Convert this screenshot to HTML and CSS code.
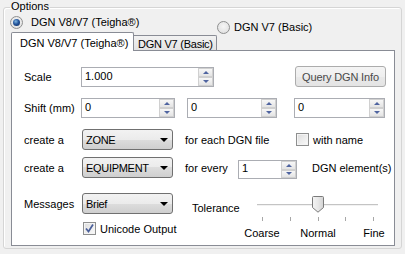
FILE: index.html
```html
<!DOCTYPE html>
<html>
<head>
<meta charset="utf-8">
<link rel="stylesheet" href="styles.css">
</head>
<body>
<fieldset class="options">
  <legend>Options</legend>
  <div class="radios">
    <label class="radio on"><span class="rdot"></span>DGN V8/V7 (Teigha®)</label>
    <label class="radio r2"><span class="rdot"></span>DGN V7 (Basic)</label>
  </div>
  <div class="tabs">
    <div class="tab active">DGN V8/V7 (Teigha®)</div>
    <div class="tab">DGN V7 (Basic)</div>
  </div>
  <div class="panel">
    <div class="row r1">
      <span class="lbl">Scale</span>
      <div class="spin w-scale"><span class="val">1.000</span><span class="sb"><i class="up"></i><i class="dn"></i></span></div>
      <button class="btn">Query DGN Info</button>
    </div>
    <div class="row r2">
      <span class="lbl">Shift (mm)</span>
      <div class="spin w-s1"><span class="val">0</span><span class="sb"><i class="up"></i><i class="dn"></i></span></div>
      <div class="spin w-s2"><span class="val">0</span><span class="sb"><i class="up"></i><i class="dn"></i></span></div>
      <div class="spin w-s3"><span class="val">0</span><span class="sb"><i class="up"></i><i class="dn"></i></span></div>
    </div>
    <div class="row r3">
      <span class="lbl">create a</span>
      <div class="combo">ZONE</div>
      <span class="mid">for each DGN file</span>
      <span class="check"></span>
      <span class="ctext">with name</span>
    </div>
    <div class="row r4">
      <span class="lbl">create a</span>
      <div class="combo">EQUIPMENT</div>
      <span class="mid2">for every</span>
      <div class="spin w-n"><span class="val">1</span><span class="sb"><i class="up"></i><i class="dn"></i></span></div>
      <span class="elem">DGN element(s)</span>
    </div>
    <div class="bottom">
      <div class="bl">
        <div class="row r5">
          <span class="lbl">Messages</span>
          <div class="combo">Brief</div>
        </div>
        <div class="row r6">
          <span class="check checked"><svg width="9" height="9" viewBox="0 0 9 9"><path d="M1 4.5 L3.5 7.5 L8 0.5" fill="none" stroke="#4a5f9a" stroke-width="1.7"/></svg></span>
          <span class="ctext">Unicode Output</span>
        </div>
      </div>
      <div class="br">
        <span class="tol">Tolerance</span>
        <div class="slider">
          <div class="track-area">
            <div class="track"></div>
            <div class="thumb"><svg width="12" height="17" viewBox="0 0 12 17"><defs><linearGradient id="tg" x1="0" y1="0" x2="1" y2="0"><stop offset="0" stop-color="#f4f4f4"/><stop offset="0.5" stop-color="#e8e8e8"/><stop offset="1" stop-color="#d2d2d2"/></linearGradient></defs><path d="M1.5 0.5 H10.5 Q11.5 0.5 11.5 1.5 V11.5 L6 16.2 L0.5 11.5 V1.5 Q0.5 0.5 1.5 0.5 Z" fill="url(#tg)" stroke="#7a7a7a"/></svg></div>
          </div>
          <div class="ticks"><i></i><i></i><i></i><i></i><i></i></div>
          <div class="tlabels"><span class="c1">Coarse</span><span class="c3">Normal</span><span class="c5">Fine</span></div>
        </div>
      </div>
    </div>
  </div>
</fieldset>
</body>
</html>
```

FILE: styles.css
```css
* { box-sizing: border-box; }
html, body { margin: 0; padding: 0; }
body {
  width: 405px;
  height: 254px;
  background: #f0f0f0;
  font-family: "Liberation Sans", Arial, sans-serif;
  font-size: 11px;
  color: #000;
  overflow: hidden;
  white-space: nowrap;
}
.options {
  margin: 0 3px;
  padding: 0 5px 2px 7px;
  border: 1px solid #d5d5d5;
  border-radius: 3px;
  box-shadow: inset 1px 1px 0 #fff;
  height: 249px;
  min-width: 0;
}
.options legend {
  padding: 0 1px;
  margin-left: -1px;
  height: 14px;
  line-height: 13px;
}
.radios {
  display: flex;
  height: 14px;
  margin-top: 1px;
  align-items: center;
}
.radio {
  display: flex;
  align-items: center;
  line-height: 13px;
}
.radio.on { margin-left: -1px; width: 207px; }
.rdot {
  width: 13px;
  height: 13px;
  border-radius: 50%;
  border: 1px solid #8e8f8f;
  background: radial-gradient(circle at 50% 40%, #f6f6f6 0%, #dcdcdc 100%);
  margin-right: 8px;
  display: inline-flex;
  align-items: center;
  justify-content: center;
  flex: none;
}
.radio.r2 .rdot { margin-right: 4px; }
.radio.on .rdot::after {
  content: "";
  width: 7px;
  height: 7px;
  border-radius: 50%;
  background: radial-gradient(circle at 40% 35%, #7fb6e0 0%, #24559c 45%, #0f2a58 100%);
}
.tabs {
  display: flex;
  align-items: flex-end;
  height: 18px;
  margin-top: 3px;
}
.tab {
  border: 1px solid #898c95;
  border-bottom: none;
  line-height: 13px;
  overflow: hidden;
  flex: none;
}
.tab.active {
  width: 123px;
  height: 19px;
  margin-bottom: -1px;
  background: #fff;
  padding: 4px 0 0 8px;
  position: relative;
  z-index: 1;
  border-radius: 2px 2px 0 0;
}
.tab:not(.active) {
  width: 83px;
  height: 15px;
  border-left: none;
  padding: 2px 0 0 4px;
  background: linear-gradient(#f2f2f2, #e3e3e3);
  border-radius: 0 2px 0 0;
  letter-spacing: -0.25px;
}
.panel {
  border: 1px solid #898c95;
  background: #fff;
  height: 196px;
  width: 384px;
  padding: 15px 8px 0 12px;
}
.row {
  display: flex;
  align-items: center;
}
.lbl { width: 57px; flex: none; }
.r1 { height: 21px; }
.r2 { height: 20px; margin-top: 11px; }
.r3 { height: 21px; margin-top: 11px; }
.r4 { height: 21px; margin-top: 7px; }
.bottom { display: flex; margin-top: 15px; }
.bl { flex: none; width: 149px; }
.r5 { height: 21px; }
.r6 { height: 13px; margin-top: 8px; padding-left: 59px; }

.spin {
  display: flex;
  height: 20px;
  border: 1px solid #abadb3;
  background: #fff;
  flex: none;
}
.spin .val {
  flex: 1;
  padding-left: 3px;
  line-height: 17px;
}
.spin .sb {
  width: 15px;
  display: flex;
  flex-direction: column;
}
.spin .sb i {
  flex: 1;
  border: 1px solid #d0d0d0;
  background: linear-gradient(#f7f7f7, #e4e4e4);
  display: flex;
  align-items: center;
  justify-content: center;
}
.spin .sb i.up::before {
  content: "";
  border-left: 3px solid transparent;
  border-right: 3px solid transparent;
  border-bottom: 3px solid #4f64a0;
}
.spin .sb i.dn::before {
  content: "";
  border-left: 3px solid transparent;
  border-right: 3px solid transparent;
  border-top: 3px solid #4f64a0;
}
.w-scale { width: 133px; margin-top: 1px; }
.w-s1 { width: 94px; }
.w-s2 { width: 90px; margin-left: 12px; }
.w-s3 { width: 91px; margin-left: 17px; }
.w-n { width: 59px; height: 19px; margin-top: 4px; }
.w-n .val { line-height: 15px; }

.btn {
  margin-left: auto;
  width: 91px;
  height: 21px;
  border: 1px solid #acacac;
  border-radius: 3px;
  background: linear-gradient(#f4f4f4 0%, #efefef 50%, #e9e9e9 50%, #e4e4e4 100%);
  font: inherit;
  color: #4a4a4a;
  padding: 0;
  letter-spacing: -0.15px;
}
.combo {
  width: 91px;
  height: 21px;
  margin-left: 1px;
  border: 1px solid #707070;
  border-radius: 3px;
  background: linear-gradient(#f2f2f2 0%, #ebebeb 50%, #dddddd 50%, #cfcfcf 100%);
  display: flex;
  align-items: center;
  padding-left: 3px;
  flex: none;
  letter-spacing: -0.3px;
}
.combo::after {
  content: "";
  margin-left: auto;
  margin-right: 4px;
  border-left: 4px solid transparent;
  border-right: 4px solid transparent;
  border-top: 4px solid #000;
}
.mid { width: 111px; margin-left: 12px; flex: none; }
.mid2 { width: 53px; margin-left: 12px; flex: none; }
.elem { margin-left: 15px; }
.check {
  width: 13px;
  height: 13px;
  border: 1px solid #8e8f8f;
  background: linear-gradient(135deg, #dcdcdc, #fbfbfb);
  box-shadow: inset 0 0 0 1px #f4f4f4;
  display: inline-flex;
  align-items: center;
  justify-content: center;
  flex: none;
}
.ctext { margin-left: 4px; }

.br { display: flex; margin-left: 19px; }
.tol { width: 58px; margin-top: 9px; line-height: 13px; flex: none; }
.slider { width: 135px; margin-top: 3px; flex: none; }
.track-area { position: relative; height: 18px; }
.track {
  position: absolute;
  left: 7px;
  width: 121px;
  top: 8px;
  height: 2px;
  background: #c4c4c4;
  border-bottom: 1px solid #f2f2f2;
}
.thumb {
  position: absolute;
  left: 62px;
  top: 0;
  width: 12px;
  height: 17px;
  line-height: 0;
}
.ticks {
  display: flex;
  justify-content: space-between;
  width: 112px;
  margin-left: 12px;
  margin-top: 3px;
  height: 4px;
}
.ticks i { width: 1px; height: 4px; background: #a7a7a7; }
.tlabels {
  display: grid;
  grid-template-columns: repeat(5, 28px);
  margin-left: -2px;
  margin-top: 6px;
  line-height: 13px;
}
.tlabels span { justify-self: center; }
.tlabels .c1 { grid-column: 1; }
.tlabels .c3 { grid-column: 3; }
.tlabels .c5 { grid-column: 5; }
```
